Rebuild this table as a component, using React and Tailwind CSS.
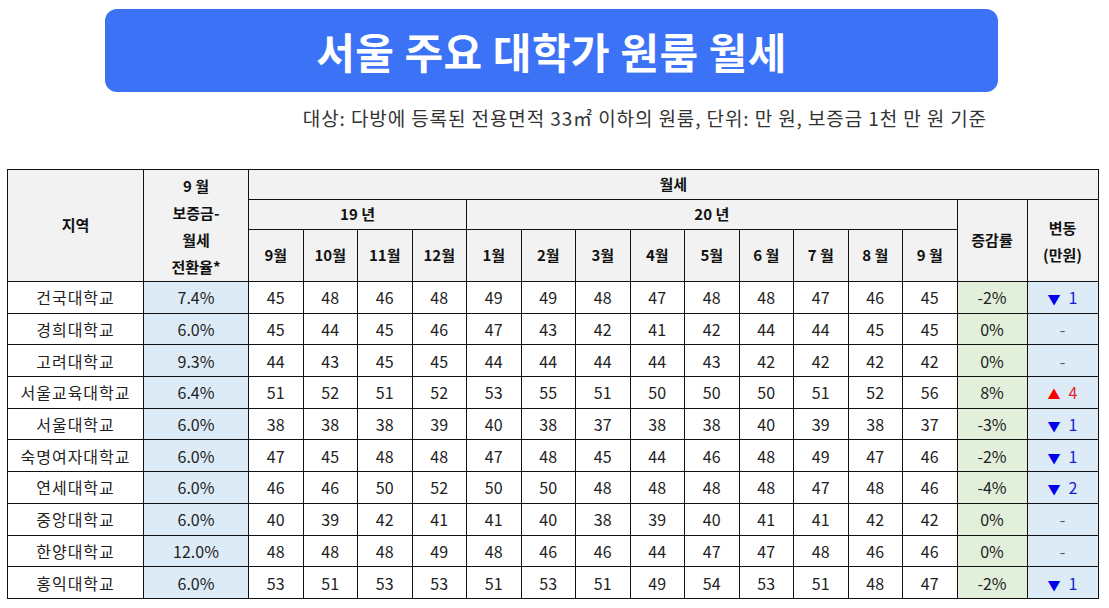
import React from "react";

const months19 = ["9월", "10월", "11월", "12월"];
const months20 = ["1월", "2월", "3월", "4월", "5월", "6 월", "7 월", "8 월", "9 월"];

const rows = [
  { name: "건국대학교", rate: "7.4%", vals: [45, 48, 46, 48, 49, 49, 48, 47, 48, 48, 47, 46, 45], pct: "-2%", diff: -1 },
  { name: "경희대학교", rate: "6.0%", vals: [45, 44, 45, 46, 47, 43, 42, 41, 42, 44, 44, 45, 45], pct: "0%", diff: 0 },
  { name: "고려대학교", rate: "9.3%", vals: [44, 43, 45, 45, 44, 44, 44, 44, 43, 42, 42, 42, 42], pct: "0%", diff: 0 },
  { name: "서울교육대학교", rate: "6.4%", vals: [51, 52, 51, 52, 53, 55, 51, 50, 50, 50, 51, 52, 56], pct: "8%", diff: 4 },
  { name: "서울대학교", rate: "6.0%", vals: [38, 38, 38, 39, 40, 38, 37, 38, 38, 40, 39, 38, 37], pct: "-3%", diff: -1 },
  { name: "숙명여자대학교", rate: "6.0%", vals: [47, 45, 48, 48, 47, 48, 45, 44, 46, 48, 49, 47, 46], pct: "-2%", diff: -1 },
  { name: "연세대학교", rate: "6.0%", vals: [46, 46, 50, 52, 50, 50, 48, 48, 48, 48, 47, 48, 46], pct: "-4%", diff: -2 },
  { name: "중앙대학교", rate: "6.0%", vals: [40, 39, 42, 41, 41, 40, 38, 39, 40, 41, 41, 42, 42], pct: "0%", diff: 0 },
  { name: "한양대학교", rate: "12.0%", vals: [48, 48, 48, 49, 48, 46, 46, 44, 47, 47, 48, 46, 46], pct: "0%", diff: 0 },
  { name: "홍익대학교", rate: "6.0%", vals: [53, 51, 53, 53, 51, 53, 51, 49, 54, 53, 51, 48, 47], pct: "-2%", diff: -1 },
];

const Diff = ({ v }) => {
  if (v === 0) return <span className="text-[#555]">-</span>;
  if (v < 0)
    return (
      <span className="text-[#1a1ad6]">
        <span className="text-[13px] text-[#0000ee] mr-[8px]">▼</span>
        {Math.abs(v)}
      </span>
    );
  return (
    <span className="text-[#e0282e]">
      <span className="text-[13px] text-[#ff0000] mr-[8px]">▲</span>
      {v}
    </span>
  );
};

const App = () => {
  const th = "border border-[#111] bg-[#f2f2f2] font-bold text-[15px] text-[#111] text-center";
  const td = "border border-[#111] text-center text-[16px] text-[#222]";
  return (
    <div className="w-[1109px] h-[608px] bg-white font-['Noto_Sans_CJK_KR','Noto_Sans',sans-serif] overflow-hidden">
      <div className="pt-[9px] pl-[105px]">
        <div className="w-[893px] h-[83px] rounded-[12px] bg-[#3b72f6] flex items-center justify-center">
          <h1 className="text-white font-bold text-[42px] tracking-[0.5px] leading-none">서울 주요 대학가 원룸 월세</h1>
        </div>
      </div>
      <div className="flex justify-end pr-[122px] mt-[14px]">
        <p className="text-[19px] text-[#333] leading-[24px] tracking-[0.9px]">
          대상: 다방에 등록된 전용면적 33㎡ 이하의 원룸, 단위: 만 원, 보증금 1천 만 원 기준
        </p>
      </div>
      <div className="pl-[7px] mt-[39px]">
        <table className="table-fixed border-collapse w-[1091px]">
          <colgroup>
            <col className="w-[136px]" />
            <col className="w-[105px]" />
            {Array.from({ length: 13 }).map((_, i) => (
              <col key={i} className="w-[54.5px]" />
            ))}
            <col className="w-[70px]" />
            <col className="w-[71px]" />
          </colgroup>
          <thead>
            <tr className="h-[30px]">
              <th rowSpan={3} className={th}>지역</th>
              <th rowSpan={3} className={`${th} leading-[27px]`}>
                9 월<br />보증금-<br />월세<br />전환율*
              </th>
              <th colSpan={15} className={th}>월세</th>
            </tr>
            <tr className="h-[30px]">
              <th colSpan={4} className={th}>19 년</th>
              <th colSpan={9} className={th}>20 년</th>
              <th rowSpan={2} className={th}>증감률</th>
              <th rowSpan={2} className={`${th} leading-[27px]`}>
                변동<br />(만원)
              </th>
            </tr>
            <tr className="h-[52px]">
              {[...months19, ...months20].map((m, i) => (
                <th key={i} className={th}>{m}</th>
              ))}
            </tr>
          </thead>
          <tbody>
            {rows.map((r) => (
              <tr key={r.name} className="h-[31.7px]">
                <td className={`${td} tracking-[1px]`}>{r.name}</td>
                <td className={`${td} bg-[#ddebf7]`}>{r.rate}</td>
                {r.vals.map((v, i) => (
                  <td key={i} className={td}>{v}</td>
                ))}
                <td className={`${td} bg-[#e2efda]`}>{r.pct}</td>
                <td className={`${td} bg-[#ddebf7]`}>
                  <Diff v={r.diff} />
                </td>
              </tr>
            ))}
          </tbody>
        </table>
      </div>
    </div>
  );
};

export default App;
